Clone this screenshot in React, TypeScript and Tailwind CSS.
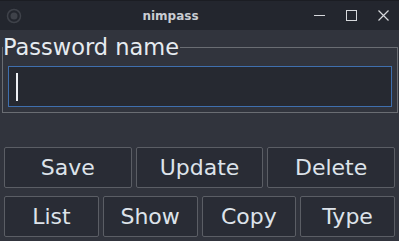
export default function App() {
  const row1 = ['Save', 'Update', 'Delete'];
  const row2 = ['List', 'Show', 'Copy', 'Type'];

  return (
    <div
      className="w-[399px] h-[241px] bg-[#31343d] flex flex-col overflow-hidden text-[#dde3ea]"
      style={{ fontFamily: '"DejaVu Sans", sans-serif' }}
    >
      {/* Title bar */}
      <div className="h-[30px] shrink-0 bg-[#23262e] border-t border-[#1b1d23] flex items-center relative">
        <svg width="16" height="16" viewBox="0 0 16 16" className="ml-[6px]">
          <circle cx="8" cy="8" r="6.5" fill="none" stroke="#3f424a" strokeWidth="1.5" />
          <circle cx="8" cy="8" r="3.5" fill="#3f424a" />
        </svg>
        <div className="absolute inset-0 flex items-center justify-center pr-[58px] text-[12px] font-bold text-[#c9ccd2]">
          nimpass
        </div>
        <div className="ml-auto flex items-center gap-[21px] mr-[10px] relative">
          <svg width="11" height="11" viewBox="0 0 11 11">
            <line x1="0" y1="5.5" x2="11" y2="5.5" stroke="#d6d8dc" strokeWidth="1" />
          </svg>
          <svg width="11" height="11" viewBox="0 0 11 11">
            <rect x="0.5" y="0.5" width="10" height="10" fill="none" stroke="#d6d8dc" strokeWidth="1" />
          </svg>
          <svg width="11" height="11" viewBox="0 0 11 11">
            <path d="M0.5 0.5 L10.5 10.5 M10.5 0.5 L0.5 10.5" stroke="#d6d8dc" strokeWidth="1.2" />
          </svg>
        </div>
      </div>

      {/* Password name group */}
      <fieldset className="mt-[5px] mx-[2px] w-[396px] border border-[#6a6d73] pb-[5px]">
        <legend className="text-[22.5px] leading-[24px] text-[#e6ebf0] ml-0 pr-[1px]">Password name</legend>
        <div className="mt-[7px] mx-[5px] h-[41px] bg-[#262931] border border-[#3f6fae] flex items-center">
          <div className="ml-[7px] w-[2px] h-[28px] bg-[#eef0f4]"></div>
        </div>
      </fieldset>

      {/* Buttons */}
      <div className="mt-[34px] px-[4px] grid grid-cols-3 gap-[4px]">
        {row1.map((label) => (
          <button
            key={label}
            className="h-[41px] bg-[#292c35] border border-[#5b5e65] rounded-[2px] text-[22px] text-[#dde3ea]"
          >
            {label}
          </button>
        ))}
      </div>
      <div className="mt-[8px] px-[4px] grid grid-cols-4 gap-[4px]">
        {row2.map((label) => (
          <button
            key={label}
            className="h-[41px] bg-[#292c35] border border-[#5b5e65] rounded-[2px] text-[22px] text-[#dde3ea]"
          >
            {label}
          </button>
        ))}
      </div>
    </div>
  );
}
